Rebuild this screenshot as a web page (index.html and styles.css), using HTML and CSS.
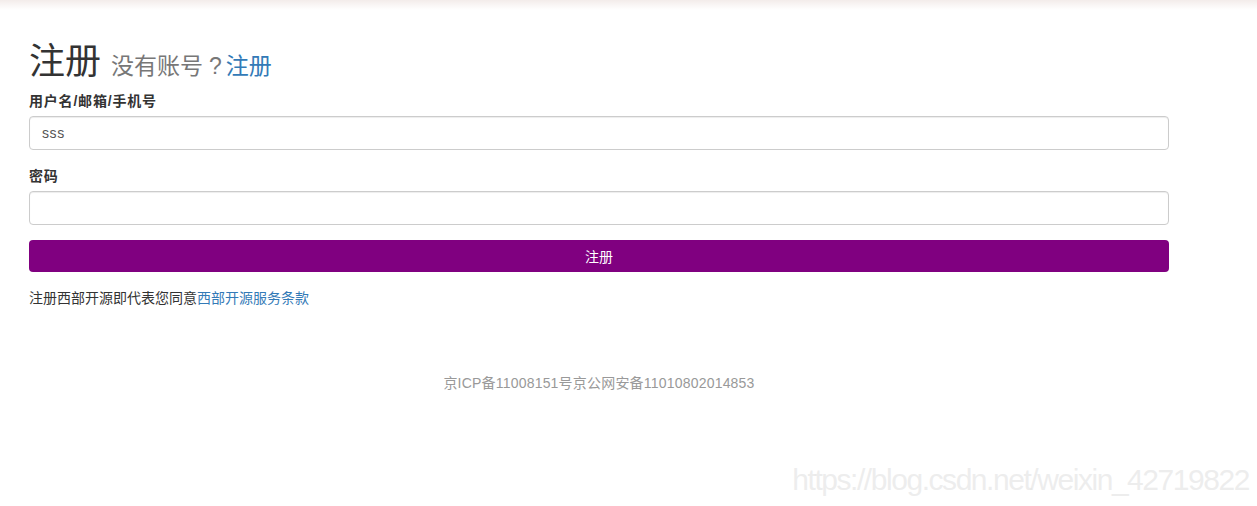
FILE: index.html
```html
<!DOCTYPE html>
<html lang="zh-CN">
<head>
<meta charset="utf-8">
<title>注册</title>
<link rel="stylesheet" href="styles.css">
</head>
<body>
<div class="topbar"></div>
<main class="container">
  <h1 class="title">注册 <small class="sub">没有账号<span class="qmark">?</span><a href="#">注册</a></small></h1>
  <form class="form">
    <div class="group">
      <label class="label">用户名/邮箱/手机号</label>
      <input class="input" type="text" value="sss">
    </div>
    <div class="group last">
      <label class="label">密码</label>
      <input class="input" type="password">
    </div>
    <button class="btn" type="button">注册</button>
  </form>
  <p class="terms">注册西部开源即代表您同意<a href="#">西部开源服务条款</a></p>
  <p class="icp">京ICP备11008151号京公网安备11010802014853</p>
</main>
<div class="watermark">https://blog.csdn.net/weixin_42719822</div>
</body>
</html>
```
FILE: styles.css
```css
html, body {
  margin: 0;
  padding: 0;
  background: #fff;
}
body {
  font-family: "Liberation Sans", "Noto Sans CJK SC", sans-serif;
  font-size: 14px;
  line-height: 20px;
  color: #333;
  height: 506px;
  position: relative;
  overflow: hidden;
}
a { color: #337ab7; text-decoration: none; }
.topbar {
  height: 10px;
  background: linear-gradient(#f3ecea, #f8f4f3 40%, #fff);
}
.container {
  width: 1140px;
  margin-left: 29px;
}
.title {
  margin: 32px 0 5px;
  font-size: 36px;
  font-weight: 400;
  line-height: 40px;
  color: #333;
}
.sub {
  font-size: 23px;
  color: #777;
  font-weight: 400;
}
.qmark {
  display: inline-block;
  padding: 0 4px 0 6px;
}
.form { margin: 0; }
.group { margin-bottom: 16px; }
.group.last { margin-bottom: 15px; }
.label {
  display: block;
  font-weight: 700;
  margin-bottom: 5px;
  letter-spacing: 0.8px;
}
.input {
  display: block;
  box-sizing: border-box;
  width: 100%;
  height: 34px;
  padding: 6px 12px;
  font-family: inherit;
  font-size: 14px;
  color: #555;
  border: 1px solid #ccc;
  border-radius: 4px;
  box-shadow: inset 0 1px 1px rgba(0,0,0,.075);
  margin: 0;
  letter-spacing: 0.6px;
}
.btn {
  display: block;
  width: 100%;
  height: 32px;
  border: 0;
  border-radius: 4px;
  background: #800080;
  color: #fff;
  font-family: inherit;
  font-size: 14px;
  padding: 0;
}
.terms {
  margin: 16px 0 0;
}
.icp {
  margin: 65px 0 0;
  text-align: center;
  color: #999;
  letter-spacing: 0.2px;
}
.watermark {
  position: absolute;
  right: 8px;
  bottom: 9px;
  font-size: 30px;
  line-height: 34px;
  letter-spacing: -1.45px;
  color: rgba(225,225,225,0.6);
  font-family: "Liberation Sans", sans-serif;
}
```
